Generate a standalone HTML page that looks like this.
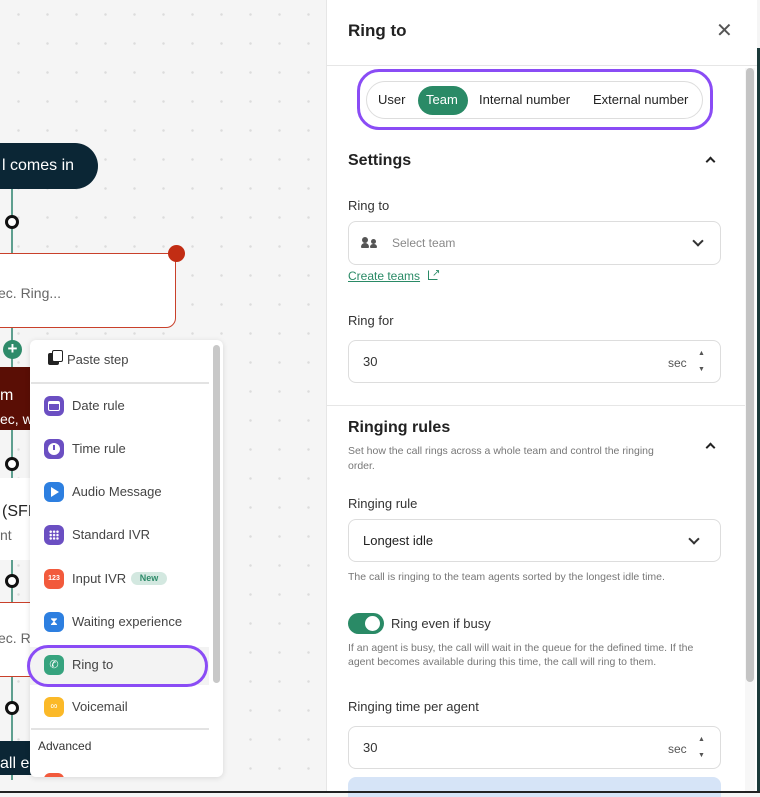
<!DOCTYPE html>
<html><head><meta charset="utf-8"><style>
*{margin:0;padding:0;box-sizing:border-box}
body{width:760px;height:793px;overflow:hidden;position:relative;font-family:"Liberation Sans",sans-serif;background:#f5f5f5}
.a{position:absolute}
.t{position:absolute;white-space:nowrap;line-height:20px}
.canvas{left:0;top:0;width:326px;height:793px;background-color:#f5f5f5;background-image:radial-gradient(circle,#dcdcdc 1px,transparent 1.5px);background-size:29px 29px;background-position:4px 0}
.node{width:14px;height:14px;border:3px solid #111;border-radius:50%;background:#fff}
.mi{position:absolute;left:44px;width:20px;height:20px;border-radius:6px}
.ml{position:absolute;left:72px;font-size:13px;color:#444;line-height:20px}
.inp{position:absolute;left:348px;width:373px;border:1px solid #ddd;border-radius:8px;background:#fff}
.lab{font-size:13px;color:#333}
.chev{position:absolute;width:8px;height:8px;border-right:2px solid #333;border-bottom:2px solid #333;transform:rotate(45deg)}
.chu{position:absolute;width:7px;height:7px;border-left:2.5px solid #222;border-top:2.5px solid #222;transform:rotate(45deg)}
.sp{position:absolute;font-size:7px;color:#555;line-height:7px}
.dots{position:absolute;left:5px;top:5px;width:10px;height:10px;background-image:radial-gradient(circle,#fff 1.1px,transparent 1.4px);background-size:3.4px 3.4px}
</style></head><body>
<div class="a canvas"></div>
<div class="a" style="left:11px;top:180px;width:2px;height:600px;background:#5e9f8f"></div>
<div class="a" style="left:-30px;top:143px;width:128px;height:46px;background:#0b2635;border-radius:23px"></div>
<div class="t" style="left:2px;top:156px;font-size:16px;color:#fff">l comes in</div>
<div class="a node" style="left:5px;top:215px"></div>
<div class="a" style="left:-10px;top:253px;width:186px;height:75px;background:#fff;border:1px solid #c9402a;border-radius:0 0 10px 10px"></div>
<div class="a" style="left:168px;top:245px;width:17px;height:17px;border-radius:50%;background:#c22d14"></div>
<div class="t" style="left:-2px;top:283px;font-size:14px;color:#666">ec. Ring...</div>
<div class="a" style="left:3px;top:340px;width:19px;height:19px;border-radius:50%;background:#2e8b6a;color:#fff;font-size:17px;line-height:18px;text-align:center;font-weight:bold">+</div>
<div class="a" style="left:0;top:367px;width:40px;height:63px;background:#5a0e05"></div>
<div class="t" style="left:0;top:386px;font-size:16px;color:#fff">m</div>
<div class="t" style="left:0;top:409px;font-size:14px;color:#fff">ec, w</div>
<div class="a node" style="left:5px;top:457px"></div>
<div class="a" style="left:0;top:478px;width:40px;height:82px;background:#fff"></div>
<div class="t" style="left:2px;top:502px;font-size:16px;color:#222">(SFI</div>
<div class="t" style="left:0;top:525px;font-size:14px;color:#666">nt</div>
<div class="a node" style="left:5px;top:574px"></div>
<div class="a" style="left:0;top:602px;width:40px;height:75px;background:#fff;border-top:1px solid #c9402a;border-bottom:1px solid #c9402a"></div>
<div class="t" style="left:-2px;top:628px;font-size:14px;color:#666">ec. R</div>
<div class="a node" style="left:5px;top:701px"></div>
<div class="a" style="left:0;top:741px;width:40px;height:34px;background:#0b2635"></div>
<div class="t" style="left:0;top:754px;font-size:16px;color:#fff">all e</div>
<div class="a" style="left:30px;top:340px;width:193px;height:437px;background:#fff;border-radius:6px;box-shadow:0 1px 6px rgba(0,0,0,.12);overflow:hidden">
 <div class="a" style="left:183px;top:5px;width:7px;height:338px;background:#c8c8c8;border-radius:4px"></div>
 <div class="a" style="left:18px;top:13px;width:11px;height:12px;background:#222;border-radius:2px"></div>
 <div class="a" style="left:22px;top:10px;width:11px;height:12px;border:1.5px solid #222;border-radius:2px;background:#fff"></div>
 <div class="t" style="left:37px;top:10px;font-size:13px;color:#444">Paste step</div>
 <div class="a" style="left:1px;top:42px;width:178px;height:2px;background:#e3e3e3"></div>
 <div class="mi" style="top:56px;left:14px;background:#6b4fc2"><div class="a" style="left:4px;top:5px;width:12px;height:10px;border:1.5px solid #fff;border-top-width:3px;border-radius:2px"></div></div>
 <div class="ml" style="top:56px;left:42px">Date rule</div>
 <div class="mi" style="top:99px;left:14px;background:#6b4fc2"><div class="a" style="left:4px;top:4px;width:12px;height:12px;border-radius:50%;background:#fff"></div><div class="a" style="left:9px;top:6px;width:2px;height:5px;background:#6b4fc2"></div></div>
 <div class="ml" style="top:99px;left:42px">Time rule</div>
 <div class="mi" style="top:142px;left:14px;background:#2d7fe0"><div class="a" style="left:7px;top:5px;border-left:8px solid #fff;border-top:5px solid transparent;border-bottom:5px solid transparent"></div></div>
 <div class="ml" style="top:142px;left:42px">Audio Message</div>
 <div class="mi" style="top:185px;left:14px;background:#6b4fc2"><div class="dots"></div></div>
 <div class="ml" style="top:185px;left:42px">Standard IVR</div>
 <div class="mi" style="top:229px;left:14px;background:#f25a3c;color:#fff;font-size:7px;font-weight:bold;text-align:center;line-height:20px">123</div>
 <div class="ml" style="top:229px;left:42px">Input IVR</div>
 <div class="a" style="left:101px;top:232px;width:36px;height:13px;border-radius:7px;background:#d3e8e0;color:#2e8b6a;font-size:9px;line-height:13px;text-align:center;font-weight:bold">New</div>
 <div class="mi" style="top:272px;left:14px;background:#2d7fe0;color:#fff;font-size:11px;text-align:center;line-height:20px">⧗</div>
 <div class="ml" style="top:272px;left:42px">Waiting experience</div>
 <div class="a" style="left:0;top:307px;width:179px;height:38px;background:#f3f3f3"></div>
 <div class="mi" style="top:315px;left:14px;background:#36a37e;color:#fff;font-size:11px;text-align:center;line-height:20px">✆</div>
 <div class="ml" style="top:315px;left:42px">Ring to</div>
 <div class="mi" style="top:357px;left:14px;background:#fbb928;color:#fff;font-size:10px;text-align:center;line-height:20px">∞</div>
 <div class="ml" style="top:357px;left:42px">Voicemail</div>
 <div class="a" style="left:1px;top:388px;width:178px;height:2px;background:#e3e3e3"></div>
 <div class="t" style="left:8px;top:396px;font-size:12px;color:#333">Advanced</div>
 <div class="a" style="left:14px;top:433px;width:20px;height:20px;border-radius:6px;background:#f25a3c"></div>
</div>
<div class="a" style="left:27px;top:645px;width:181px;height:42px;border:3px solid #8a4cf5;border-radius:21px"></div>
<div class="a" style="left:326px;top:0;width:431px;height:793px;background:#fff;border-left:1px solid #e6e6e6"></div>
<div class="a" style="left:757px;top:48px;width:3px;height:745px;background:#1c3a3a"></div>
<div class="t" style="left:348px;top:21px;font-size:17px;font-weight:bold;color:#222">Ring to</div>
<div class="t" style="left:716px;top:21px;font-size:20px;color:#555">✕</div>
<div class="a" style="left:327px;top:65px;width:430px;height:1px;background:#e6e6e6"></div>
<div class="a" style="left:745px;top:68px;width:10px;height:725px;background:#f7f7f7"></div>
<div class="a" style="left:746px;top:68px;width:8px;height:614px;background:#c4c4c4;border-radius:4px"></div>
<div class="a" style="left:366px;top:81px;width:337px;height:38px;border:1px solid #ddd;border-radius:19px"></div>
<div class="a" style="left:357px;top:69px;width:356px;height:61px;border:3.5px solid #8a4cf5;border-radius:22px"></div>
<div class="a" style="left:418px;top:86px;width:50px;height:29px;background:#2a8a66;border-radius:15px"></div>
<div class="t" style="left:378px;top:90px;font-size:13px;color:#222">User</div>
<div class="t" style="left:426px;top:90px;font-size:13px;color:#fff">Team</div>
<div class="t" style="left:479px;top:90px;font-size:13px;color:#222">Internal number</div>
<div class="t" style="left:593px;top:90px;font-size:13px;color:#222">External number</div>
<div class="t" style="left:348px;top:151px;font-size:16px;font-weight:bold;color:#222">Settings</div>
<div class="chu" style="left:707px;top:158px"></div>
<div class="t lab" style="left:348px;top:196px">Ring to</div>
<div class="inp" style="top:221px;height:44px"></div>
<div class="a" style="left:362px;top:237px;width:6px;height:6px;border-radius:50%;background:#555"></div>
<div class="a" style="left:361px;top:243px;width:8px;height:5px;border-radius:4px 4px 1px 1px;background:#555"></div>
<div class="a" style="left:371px;top:239px;width:5px;height:5px;border-radius:50%;background:#555"></div>
<div class="a" style="left:370px;top:244px;width:7px;height:4px;border-radius:3px 3px 1px 1px;background:#555"></div>
<div class="t" style="left:392px;top:233px;font-size:12px;color:#888">Select team</div>
<div class="chev" style="left:694px;top:237px"></div>
<div class="t" style="left:348px;top:266px;font-size:12px;color:#2a8a66;text-decoration:underline">Create teams</div>
<div class="a" style="left:428px;top:270px;width:10px;height:10px;border:1px solid #2a8a66;border-right-color:transparent;border-top-color:transparent"></div>
<div class="t" style="left:432px;top:264px;font-size:10px;color:#2a8a66">↗</div>
<div class="t lab" style="left:348px;top:311px">Ring for</div>
<div class="inp" style="top:340px;height:43px"></div>
<div class="t" style="left:363px;top:352px;font-size:13px;color:#333">30</div>
<div class="t" style="left:668px;top:353px;font-size:12px;color:#555">sec</div>
<div class="sp" style="left:698px;top:350px">▲</div><div class="sp" style="left:698px;top:366px">▼</div>
<div class="a" style="left:327px;top:405px;width:418px;height:1px;background:#e6e6e6"></div>
<div class="t" style="left:348px;top:418px;font-size:16px;font-weight:bold;color:#222">Ringing rules</div>
<div class="chu" style="left:707px;top:444px"></div>
<div class="a" style="left:348px;top:444px;width:330px;font-size:10.5px;line-height:15px;color:#777">Set how the call rings across a whole team and control the ringing<br>order.</div>
<div class="t lab" style="left:348px;top:494px">Ringing rule</div>
<div class="inp" style="top:519px;height:43px"></div>
<div class="t" style="left:363px;top:531px;font-size:13px;color:#222">Longest idle</div>
<div class="chev" style="left:690px;top:535px"></div>
<div class="t" style="left:348px;top:567px;font-size:10.5px;color:#777">The call is ringing to the team agents sorted by the longest idle time.</div>
<div class="a" style="left:348px;top:613px;width:36px;height:21px;border-radius:11px;background:#2a8a66"></div>
<div class="a" style="left:365px;top:616px;width:15px;height:15px;border-radius:50%;background:#fff"></div>
<div class="t" style="left:391px;top:614px;font-size:13px;color:#333">Ring even if busy</div>
<div class="a" style="left:348px;top:641px;width:380px;font-size:10.5px;line-height:14px;color:#777">If an agent is busy, the call will wait in the queue for the defined time. If the<br>agent becomes available during this time, the call will ring to them.</div>
<div class="t lab" style="left:348px;top:697px">Ringing time per agent</div>
<div class="inp" style="top:726px;height:43px"></div>
<div class="t" style="left:363px;top:738px;font-size:13px;color:#333">30</div>
<div class="t" style="left:668px;top:739px;font-size:12px;color:#555">sec</div>
<div class="sp" style="left:698px;top:736px">▲</div><div class="sp" style="left:698px;top:752px">▼</div>
<div class="a" style="left:348px;top:777px;width:373px;height:20px;background:#d6e4f7;border-radius:8px 8px 0 0"></div>
<div class="a" style="left:0;top:791px;width:760px;height:2px;background:#222"></div>
</body></html>
